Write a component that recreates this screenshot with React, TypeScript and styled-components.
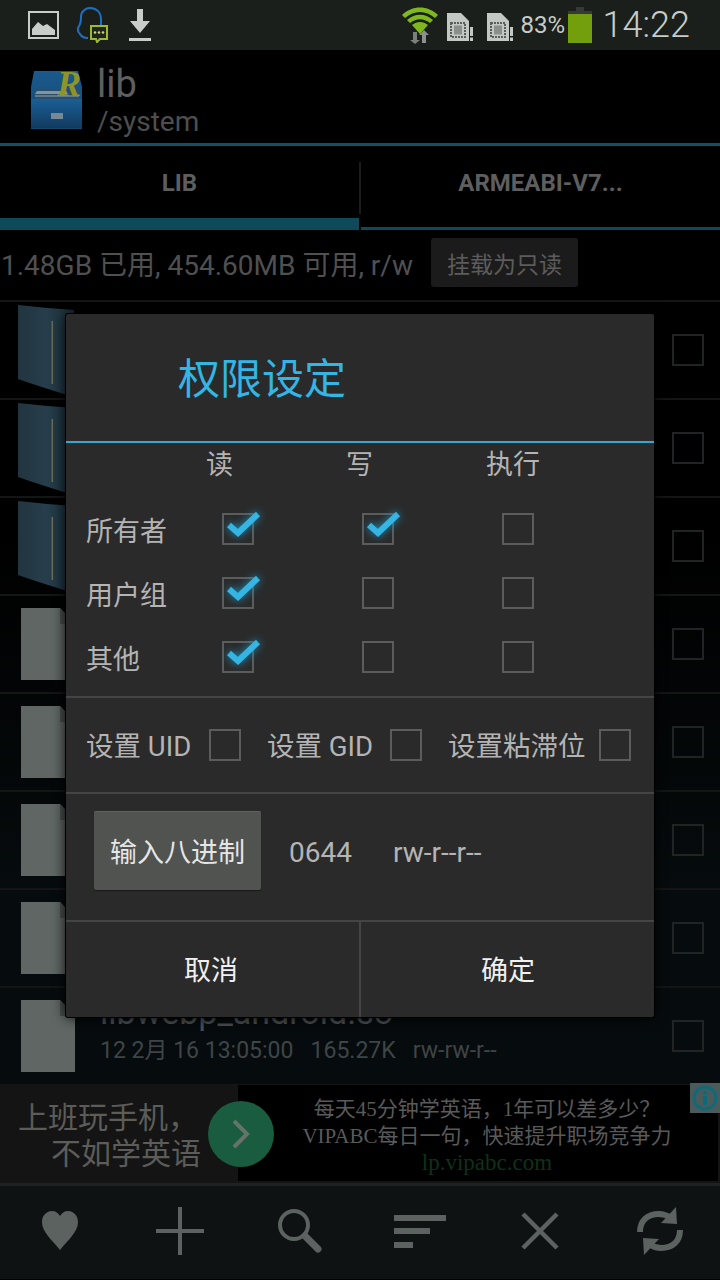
import React from "react";
import styled, { createGlobalStyle } from "styled-components";

const FONT = `Roboto, "Noto Sans CJK SC", sans-serif`;

const GlobalStyle = createGlobalStyle`
  html, body {
    margin: 0;
    padding: 0;
    background: #000;
  }
  * {
    box-sizing: border-box;
  }
`;

type Entry = {
  kind: "folder" | "file";
  name?: string;
  info?: string;
};

// only the last row can be read, the dialog covers the others
const entries: Entry[] = [
  { kind: "folder" },
  { kind: "folder" },
  { kind: "folder" },
  { kind: "file" },
  { kind: "file" },
  { kind: "file" },
  { kind: "file" },
  { kind: "file", name: "libwebp_android.so", info: "12 2月 16 13:05:00   165.27K   rw-rw-r--" },
];

const permissions = [
  { label: "所有者", checks: [true, true, false] },
  { label: "用户组", checks: [true, false, false] },
  { label: "其他", checks: [true, false, false] },
];

const GalleryIcon = () => (
  <svg width="31" height="28" viewBox="0 0 31 28">
    <rect x="1" y="1" width="29" height="26" fill="none" stroke="#c9cdc9" strokeWidth="2" />
    <path d="M4 24 V18 L10 11 L15 15 L19 13 L27 19 V24 Z" fill="#c9cdc9" />
  </svg>
);

const QQIcon = () => (
  <svg width="32" height="36" viewBox="0 0 32 36">
    <path
      d="M11 31 C7 31 4 29 3 27 C1 25 0 22 2 19 C4 16 4 14 4 10 C4 4 9 1 13 1 C19 1 24 5 24 12 V18"
      fill="none"
      stroke="#1f6fc0"
      strokeWidth="2"
    />
    <path d="M14 19 H30 V32 H23 L20 35 L19 32 H14 Z" fill="#222" stroke="#9bbb2c" strokeWidth="2" />
    <circle cx="18" cy="25.5" r="1.3" fill="#c3d96a" />
    <circle cx="22" cy="25.5" r="1.3" fill="#c3d96a" />
    <circle cx="26" cy="25.5" r="1.3" fill="#c3d96a" />
  </svg>
);

const DownloadIcon = () => (
  <svg width="24" height="33" viewBox="0 0 24 33">
    <path d="M10 0 H16 V12 H23 L13 24 L3 12 H10 Z" fill="#c9cdc9" />
    <rect x="2" y="29" width="22" height="3" fill="#c9cdc9" />
  </svg>
);

const WifiIcon = () => (
  <svg width="36" height="37" viewBox="0 0 36 37">
    <path d="M0 8 C10 -2 26 -2 36 8 L33 11 C24 3 12 3 3 11 Z" fill="#7fb81c" />
    <path d="M5 13 C13 6 23 6 31 13 L28 16 C21 11 15 11 8 16 Z" fill="#7fb81c" />
    <path d="M10 18 C15 14 21 14 26 18 L18 27 Z" fill="#7fb81c" />
    <path d="M11 25 H15 V33 H18 L13 37 L8 33 H11 Z" fill="#7c807c" />
    <path d="M20 36 V28 H17 L22 23 L27 28 H24 V36 Z" fill="#8c908c" />
  </svg>
);

const SimIcon = () => (
  <svg width="26" height="28" viewBox="0 0 26 28">
    <path d="M0 0 H14 L22 8 V28 H0 Z" fill="#c4c8c4" />
    <rect x="4" y="10" width="14" height="14" fill="none" stroke="#5a5e5a" strokeWidth="2" strokeDasharray="2 1" />
    <rect x="7" y="12.5" width="8" height="9" fill="#8c908c" />
    <rect x="23" y="14" width="3" height="9" fill="#c4c8c4" />
    <rect x="23" y="24.5" width="3" height="3.5" fill="#c4c8c4" />
  </svg>
);

const BatteryIcon = () => (
  <svg width="24" height="36" viewBox="0 0 24 36">
    <rect x="8" y="0" width="8" height="5" fill="#353a36" />
    <rect y="4" width="24" height="3" fill="#353a36" />
    <rect y="7" width="24" height="29" fill="#739f0c" />
  </svg>
);

const LogoIcon = () => (
  <svg width="54" height="62" viewBox="0 0 54 62" overflow="visible">
    <defs>
      <linearGradient id="cabTop" x1="0" y1="0" x2="0" y2="1">
        <stop offset="0" stopColor="#1a5a8c" />
        <stop offset="1" stopColor="#14456e" />
      </linearGradient>
      <linearGradient id="cabFront" x1="0" y1="0" x2="0" y2="1">
        <stop offset="0" stopColor="#1a5f96" />
        <stop offset="1" stopColor="#123a60" />
      </linearGradient>
    </defs>
    <path d="M4 2 H48 L52 18 V60 H1 V18 Z" fill="url(#cabTop)" />
    <rect x="5" y="20" width="44" height="10" fill="#2e4e66" />
    <path d="M7 22 H36 L38 25 H5 Z" fill="#7d95a4" />
    <rect x="5" y="26" width="44" height="2" fill="#5d7a8e" />
    <rect x="1" y="30" width="51" height="29" fill="url(#cabFront)" />
    <rect x="21" y="44" width="12" height="6" fill="#7a8894" />
    <text x="27" y="27" fontFamily="'Liberation Serif', serif" fontStyle="italic" fontWeight="700" fontSize="36" fill="#8f9426">
      R
    </text>
  </svg>
);

const FolderIcon = () => (
  <svg width="56" height="90" viewBox="0 0 56 90">
    <defs>
      <linearGradient id="door" x1="0" y1="0" x2="1" y2="0">
        <stop offset="0" stopColor="#22343f" />
        <stop offset="0.5" stopColor="#263e4b" />
        <stop offset="1" stopColor="#1a2f39" />
      </linearGradient>
    </defs>
    <path d="M0 0 C20 2 40 4 56 5 V90 L46 89 C30 84 14 79 0 74 Z" fill="url(#door)" />
    <rect x="33.5" y="16" width="1.5" height="63" fill="#6a6b58" />
  </svg>
);

const FileIcon = () => (
  <svg width="54" height="72" viewBox="0 0 54 72">
    <path d="M0 0 H39 L54 16 V72 H0 Z" fill="#5f6663" />
    <path d="M39 0 L54 16 H39 Z" fill="#484e4c" />
  </svg>
);

const HeartIcon = () => (
  <svg width="36" height="40" viewBox="0 0 36 40">
    <path
      d="M18 39 C10 29 0 21 0 11 C0 4 5 0 10 0 C14 0 16 2 18 5 C20 2 22 0 26 0 C31 0 36 4 36 11 C36 21 26 29 18 39 Z"
      fill="#5c625f"
    />
  </svg>
);

const PlusIcon = () => (
  <svg width="48" height="48" viewBox="0 0 48 48">
    <path d="M0 24 H48 M24 0 V48" stroke="#5c625f" strokeWidth="4" />
  </svg>
);

const SearchIcon = () => (
  <svg width="46" height="46" viewBox="0 0 46 46">
    <circle cx="17" cy="17" r="14" fill="none" stroke="#5c625f" strokeWidth="4" />
    <path d="M28 28 L41 41" stroke="#5c625f" strokeWidth="7" strokeLinecap="round" />
  </svg>
);

const SortIcon = () => (
  <svg width="52" height="33" viewBox="0 0 52 33">
    <rect width="52" height="6" fill="#5c625f" />
    <rect y="13" width="36" height="6" fill="#5c625f" />
    <rect y="27" width="19" height="6" fill="#5c625f" />
  </svg>
);

const CloseIcon = () => (
  <svg width="38" height="38" viewBox="0 0 38 38">
    <path d="M2 2 L36 36 M36 2 L2 36" stroke="#5c625f" strokeWidth="4.5" />
  </svg>
);

const RefreshIcon = () => (
  <svg width="46" height="48" viewBox="0 0 46 48">
    <path d="M3 25 C3 14 10 7 22 7 C27 7 31 9 34 11" fill="none" stroke="#5c625f" strokeWidth="6" />
    <path d="M39 0 L40 17 L24 16 Z" fill="#5c625f" />
    <path d="M43 23 C43 34 36 41 24 41 C19 41 15 39 12 37" fill="none" stroke="#5c625f" strokeWidth="6" />
    <path d="M7 48 L6 31 L22 32 Z" fill="#5c625f" />
  </svg>
);

const TickIcon = () => (
  <svg width="38" height="28" viewBox="0 0 38 28">
    <path d="M5 15 L14 23 L34 4" fill="none" stroke="#35b5e3" strokeWidth="6" />
  </svg>
);

const App = () => {
  return (
    <Page>
      <GlobalStyle />
      <StatusBar>
        <StatusLeft>
          <GalleryIcon />
          <QQIcon />
          <DownloadIcon />
        </StatusLeft>
        <StatusRight>
          <WifiIcon />
          <SimGroup>
            <SimIcon />
            <SimIcon />
          </SimGroup>
          <BatteryText>83%</BatteryText>
          <BatteryIcon />
          <Clock>14:22</Clock>
        </StatusRight>
      </StatusBar>

      <AppBar>
        <LogoIcon />
        <AppTitles>
          <AppTitle>lib</AppTitle>
          <AppPath>/system</AppPath>
        </AppTitles>
      </AppBar>

      <Tabs>
        <Tab $active>LIB</Tab>
        <TabDivider />
        <Tab>ARMEABI-V7...</Tab>
      </Tabs>

      <InfoRow>
        <InfoText>1.48GB 已用, 454.60MB 可用, r/w</InfoText>
        <MountButton>挂载为只读</MountButton>
      </InfoRow>

      <FileList>
        {entries.map((entry, i) => (
          <FileRow key={i}>
            <IconSlot $kind={entry.kind}>{entry.kind === "folder" ? <FolderIcon /> : <FileIcon />}</IconSlot>
            <FileTexts>
              {entry.name && <FileName>{entry.name}</FileName>}
              {entry.info && <FileInfo>{entry.info}</FileInfo>}
            </FileTexts>
            <RowCheck />
          </FileRow>
        ))}
      </FileList>

      <AdBar>
        <AdLeft>
          <AdSlogan>
            <SloganFirst>上班玩手机，</SloganFirst>
            <span>不如学英语</span>
          </AdSlogan>
        </AdLeft>
        <AdRight>
          <AdLine>每天45分钟学英语，1年可以差多少？</AdLine>
          <AdLine>VIPABC每日一句，快速提升职场竞争力</AdLine>
          <AdLink>lp.vipabc.com</AdLink>
        </AdRight>
        <AdArrow>
          <svg width="18" height="30" viewBox="0 0 18 30">
            <path d="M2 2 L15 15 L2 28" fill="none" stroke="#66736a" strokeWidth="4" />
          </svg>
        </AdArrow>
        <AdInfo>
          <svg width="26" height="26" viewBox="0 0 26 26">
            <circle cx="13" cy="13" r="11" fill="none" stroke="#0e6a78" strokeWidth="3" />
            <rect x="11" y="11" width="4" height="9" fill="#0e6a78" />
            <rect x="11" y="6" width="4" height="3.5" fill="#0e6a78" />
          </svg>
        </AdInfo>
      </AdBar>

      <BottomBar>
        <BottomSlot><HeartIcon /></BottomSlot>
        <BottomSlot><PlusIcon /></BottomSlot>
        <BottomSlot><SearchIcon /></BottomSlot>
        <BottomSlot><SortIcon /></BottomSlot>
        <BottomSlot><CloseIcon /></BottomSlot>
        <BottomSlot><RefreshIcon /></BottomSlot>
      </BottomBar>

      <Dialog>
        <DialogTitle>权限设定</DialogTitle>
        <PermSection>
          <PermHeader>
            <span>读</span>
            <span>写</span>
            <span>执行</span>
          </PermHeader>
          {permissions.map((row) => (
            <PermRow key={row.label}>
              <PermLabel>{row.label}</PermLabel>
              {row.checks.map((checked, i) => (
                <CheckBox key={i}>
                  {checked && (
                    <TickMark>
                      <TickIcon />
                    </TickMark>
                  )}
                </CheckBox>
              ))}
            </PermRow>
          ))}
        </PermSection>
        <FlagRow>
          <FlagItem $width={155}>
            <FlagText>设置 UID</FlagText>
            <CheckBox />
          </FlagItem>
          <FlagItem $width={155}>
            <FlagText>设置 GID</FlagText>
            <CheckBox />
          </FlagItem>
          <FlagItem $width={183}>
            <FlagText>设置粘滞位</FlagText>
            <CheckBox />
          </FlagItem>
        </FlagRow>
        <OctalRow>
          <OctalButton>输入八进制</OctalButton>
          <OctalValue>0644</OctalValue>
          <OctalValue>rw-r--r--</OctalValue>
        </OctalRow>
        <DialogActions>
          <ActionButton>取消</ActionButton>
          <ActionButton $right>确定</ActionButton>
        </DialogActions>
      </Dialog>
    </Page>
  );
};

export default App;

const Page = styled.div`
  position: relative;
  width: 720px;
  height: 1280px;
  overflow: hidden;
  background: #000;
  font-family: ${FONT};
`;

const StatusBar = styled.div`
  display: flex;
  justify-content: space-between;
  align-items: center;
  height: 50px;
  padding: 0 30px 0 28px;
  background: #1b1f1c;
`;

const StatusLeft = styled.div`
  display: flex;
  align-items: center;
  gap: 18px;
`;

const StatusRight = styled.div`
  display: flex;
  align-items: center;
`;

const SimGroup = styled.div`
  display: flex;
  gap: 14px;
  margin: 4px 8px 0 9px;
`;

const BatteryText = styled.span`
  width: 47px;
  color: #c8ccc8;
  font-size: 24px;
`;

const Clock = styled.span`
  margin-left: 11px;
  color: #c8ccc8;
  font-size: 36px;
  font-weight: 300;
`;

const AppBar = styled.div`
  display: flex;
  align-items: center;
  gap: 13px;
  height: 96px;
  padding: 6px 0 0 30px;
  background: #000;
  border-bottom: 3px solid #14505f;
`;

const AppTitles = styled.div`
  display: flex;
  flex-direction: column;
`;

const AppTitle = styled.span`
  color: #5f5f5f;
  font-size: 38px;
  line-height: 44px;
`;

const AppPath = styled.span`
  color: #4e4e4e;
  font-size: 28px;
  line-height: 32px;
`;

const Tabs = styled.div`
  display: flex;
  height: 84px;
`;

const Tab = styled.div<{ $active?: boolean }>`
  display: flex;
  flex: 1;
  justify-content: center;
  padding-top: 23px;
  color: #5e5e5e;
  font-size: 24px;
  font-weight: 700;
  border-bottom: ${(p) => (p.$active ? "12px solid #0f4a5a" : "3px solid #0f4a5a")};
`;

const TabDivider = styled.div`
  flex-shrink: 0;
  width: 2px;
  height: 52px;
  margin-top: 16px;
  background: #1c1c1c;
`;

const InfoRow = styled.div`
  display: flex;
  align-items: center;
  gap: 18px;
  height: 70px;
  padding: 0 0 5px 1px;
`;

const InfoText = styled.span`
  color: #505050;
  font-size: 28px;
`;

const MountButton = styled.div`
  display: flex;
  justify-content: center;
  align-items: center;
  width: 147px;
  height: 49px;
  background: #1b1b1b;
  border-radius: 3px;
  color: #5c5c5c;
  font-size: 23px;
`;

const FileList = styled.div`
  background: linear-gradient(#000, #000 30%, #060b0d 75%);
`;

const FileRow = styled.div`
  display: flex;
  align-items: center;
  height: 98px;
  padding-right: 16px;
  border-top: 2px solid #141616;
`;

const IconSlot = styled.div<{ $kind: "folder" | "file" }>`
  display: flex;
  width: 100px;
  padding-left: ${(p) => (p.$kind === "folder" ? "18px" : "21px")};
`;

const FileTexts = styled.div`
  display: flex;
  flex: 1;
  flex-direction: column;
  gap: 4px;
  min-width: 0;
  padding-bottom: 14px;
`;

const FileName = styled.span`
  color: #494e50;
  font-size: 34px;
  line-height: 40px;
`;

const FileInfo = styled.span`
  color: #3f4547;
  font-size: 23px;
  line-height: 30px;
  white-space: pre;
`;

const RowCheck = styled.div`
  width: 32px;
  height: 32px;
  border: 2px solid #202424;
`;

const AdBar = styled.div`
  position: relative;
  display: flex;
  height: 99px;
  background: #141414;
`;

const AdLeft = styled.div`
  display: flex;
  align-items: center;
  width: 238px;
  padding: 4px 0 0 10px;
`;

const AdSlogan = styled.div`
  display: flex;
  flex-direction: column;
  align-items: flex-end;
  width: 191px;
  color: #5c5c58;
  font-size: 30px;
  line-height: 36px;
`;

const SloganFirst = styled.span`
  margin-right: 3px;
`;

const AdRight = styled.div`
  display: flex;
  flex: 1;
  flex-direction: column;
  align-items: center;
  margin: 1px 2px 2px 0;
  padding: 11px 0 0 18px;
  background: #000;
`;

const AdLine = styled.span`
  color: #5a5a5a;
  font-family: "Liberation Serif", "Noto Sans CJK SC", serif;
  font-size: 21px;
  line-height: 27px;
`;

const AdLink = styled(AdLine)`
  color: #0e3219;
  font-size: 23px;
  line-height: 25px;
`;

const AdArrow = styled.div`
  position: absolute;
  left: 208px;
  top: 17px;
  display: flex;
  justify-content: center;
  align-items: center;
  width: 66px;
  height: 66px;
  border-radius: 50%;
  background: #195c3f;
`;

const AdInfo = styled.div`
  position: absolute;
  right: 0;
  top: -1px;
  display: flex;
  justify-content: center;
  align-items: center;
  width: 30px;
  height: 30px;
  background: #4b5a5a;
`;

const BottomBar = styled.div`
  display: flex;
  height: 96px;
  padding-bottom: 3px;
  background: #0e1213;
  border-top: 3px solid #1e2322;
`;

const BottomSlot = styled.div`
  display: flex;
  flex: 1;
  justify-content: center;
  align-items: center;
`;

const Dialog = styled.div`
  position: absolute;
  left: 66px;
  top: 314px;
  display: flex;
  flex-direction: column;
  width: 588px;
  height: 703px;
  background: #2a2a2a;
  border-radius: 2px;
  box-shadow: 0 0 0 1px #000, 0 0 14px #000;
`;

const DialogTitle = styled.div`
  display: flex;
  align-items: center;
  height: 129px;
  padding: 0 0 4px 112px;
  color: #33b5e5;
  font-size: 42px;
  border-bottom: 2px solid #33a8d4;
`;

const PermSection = styled.div`
  height: 255px;
  border-bottom: 2px solid #444;
`;

const PermHeader = styled.div`
  display: grid;
  grid-template-columns: repeat(3, 140px);
  height: 40px;
  margin-bottom: 14px;
  padding-left: 140px;
  color: #b4b4b4;
  font-size: 27px;
  line-height: 44px;
`;

const PermRow = styled.div`
  display: grid;
  grid-template-columns: 156px repeat(2, 140px) 32px;
  align-items: center;
  height: 64px;
`;

const PermLabel = styled.span`
  padding-left: 20px;
  color: #b4b4b4;
  font-size: 27px;
`;

const CheckBox = styled.div`
  position: relative;
  width: 32px;
  height: 32px;
  border: 2px solid #5c5c5c;
  flex-shrink: 0;
`;

const TickMark = styled.div`
  position: absolute;
  left: 0;
  top: -5px;
  display: flex;
  filter: drop-shadow(0 0 4px #1f93bd);
`;

const FlagRow = styled.div`
  display: flex;
  align-items: center;
  gap: 26px;
  height: 96px;
  padding-left: 20px;
  border-bottom: 2px solid #444;
`;

const FlagItem = styled.div<{ $width: number }>`
  display: flex;
  justify-content: space-between;
  align-items: center;
  width: ${(p) => p.$width}px;
`;

const FlagText = styled.span`
  padding-bottom: 3px;
  color: #b4b4b4;
  font-size: 27.5px;
`;

const OctalRow = styled.div`
  display: flex;
  align-items: flex-start;
  gap: 41px;
  height: 128px;
  padding: 17px 0 0 28px;
  border-bottom: 2px solid #444;
  color: #b4b4b4;
  font-size: 28px;
`;

const OctalButton = styled.div`
  display: flex;
  justify-content: center;
  align-items: center;
  width: 167px;
  height: 79px;
  margin-right: -13px;
  background: #505350;
  border-radius: 2px;
  box-shadow: inset 0 1px 0 #5e615e, 0 1px 1px #1a1a1a;
  color: #e6e6e6;
  font-size: 27px;
`;

const OctalValue = styled.span`
  padding-top: 2px;
  line-height: 79px;
`;

const DialogActions = styled.div`
  display: flex;
  flex: 1;
`;

const ActionButton = styled.div<{ $right?: boolean }>`
  display: flex;
  justify-content: ${(p) => (p.$right ? "flex-start" : "center")};
  align-items: center;
  ${(p) => (p.$right ? "flex: 1; padding-left: 120px; border-left: 2px solid #444;" : "width: 293px; padding-right: 3px;")}
  padding-bottom: 2px;
  color: #f0f0f0;
  font-size: 27px;
`;
